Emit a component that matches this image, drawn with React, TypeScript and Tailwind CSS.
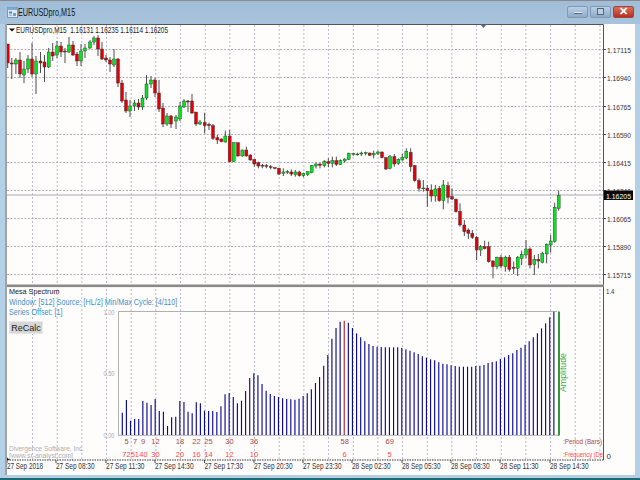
import React from "react";

type C = [number, number, number, number, number, "g" | "r"];

const seg1: C[] = [
  [7.7,44,63,44,68,"r"],[11.8,63,64,58,79,"r"],[15.9,60,64,58,74,"g"],[20,60,74,52,78,"r"],[24,69,75,61,83,"g"],[28,59,69,55,73,"g"],[32,59,74,43,77,"r"],[36,61,74,56,94,"g"],[40.5,61,63,52,73,"r"],[44.5,62,67,55,82,"r"],[48.7,52,67,48,68,"g"],[52.7,52,56,43,61,"r"],[57,46,55,41,58,"g"],[61,46,52,42,57,"r"],[65,51,52,48,63,"r"],[69,45,52,37,53,"g"],[73,45,55,41,56,"r"],[77,54,61,52,66,"r"],[81,51,61,44,66,"g"],[85,48,51,44,58,"g"],[90,42,48,40,49,"g"],[94,38,42,36,45,"g"],[98,38,49,35,56,"r"],[102,49,59,42,60,"r"],[106,58,60,55,62,"r"],[110,60,64,57,72,"r"],[114,59,65,49,67,"g"],[118,59,83,58,87,"r"],[122,83,101,80,103,"r"],[126,100,111,92,113,"r"],[130,106,111,100,117,"g"],[134.5,103,106,100,111,"g"],[138.5,103,107,99,110,"r"],[142.5,98,107,95,110,"g"],[146.5,84,98,75,100,"g"],[151,80,84,76,88,"g"],[155,80,93,78,97,"r"],[159,93,109,80,112,"r"],[163,108,124,103,127,"r"],[167,116,124,113,126,"g"],[171,116,124,115,128,"r"],[176,117,121,115,129,"g"],[180,106,119,102,121,"g"],[184,101,107,99,108,"g"],[188,101,102,100,112,"r"],[192,101,113,94,114,"r"],[196,112,124,112,126,"r"],
];

const seg2: C[] = ([
  [0,36,42,30,45,"g"],[14,38,47,8,70,"r"],[27,43,47,38,60,"r"],[39,47,85,42,90,"r"],[52,83,90,75,102,"r"],[64,87,95,85,97,"r"],[76,78,96,62,98,"g"],[89,78,155,60,157,"r"],[101,98,155,97,155,"g"],[114,98,138,98,140,"r"],[127,120,138,119,140,"g"],[139,120,138,110,140,"r"],[151,135,150,133,152,"r"],[163,148,162,148,170,"r"],[175,158,168,155,175,"r"],[187,166,168,162,175,"r"],[199,167,169,162,175,"r"],[212,170,172,165,178,"r"],[225,173,175,171,178,"r"],[237,175,192,173,195,"r"],[250,186,190,175,198,"g"],[262,185,187,180,192,"g"],[274,186,192,178,198,"r"],[286,186,194,180,200,"g"],[298,186,197,182,200,"r"],[310,190,197,188,202,"g"],[323,185,194,183,198,"g"],[335,166,188,165,190,"g"],[348,162,168,158,175,"g"],[360,162,166,158,175,"r"],[373,155,167,150,172,"g"],[385,155,160,145,172,"r"],[397,152,160,140,172,"g"],[409,152,163,140,168,"r"],[421,152,163,148,165,"g"],[434,147,153,145,158,"g"],[446,130,148,128,150,"g"],[460,131,133,128,137,"g"],[472,132,134,128,137,"g"],[484,129,132,125,138,"g"],[497,128,130,125,136,"g"],[509,129,136,128,138,"r"],[521,130,135,122,145,"g"],[534,126,131,122,135,"g"],[546,126,143,124,145,"r"],[558,143,177,142,180,"r"],[570,140,175,135,178,"g"],[583,140,162,132,170,"r"],[595,148,160,145,165,"g"],[607,142,150,132,152,"g"],[619,124,144,115,148,"g"],[632,127,170,115,185,"r"],[644,167,212,165,215,"r"],[657,212,235,205,245,"r"],
] as C[]).map(([x, t, b, h, l, c]) => [200 + x / 3, 110 + t / 3, 110 + b / 3, 110 + h / 3, 110 + l / 3, c] as C);

const seg3: C[] = ([
  [10,54,56,30,65,"g"],[22,55,62,45,110,"r"],[34,60,78,43,95,"r"],[46,57,78,45,95,"g"],[58,55,92,48,95,"r"],[70,45,92,30,118,"g"],[84,47,82,35,100,"r"],[96,80,87,55,90,"r"],[108,88,125,85,128,"r"],[120,124,165,100,170,"r"],[133,165,185,150,198,"r"],[145,180,190,175,207,"r"],[157,190,202,180,207,"r"],[170,202,240,198,270,"r"],[182,230,240,225,258,"g"],[194,230,236,212,238,"r"],[206,230,275,215,278,"r"],[219,273,290,270,325,"r"],[231,262,290,260,298,"g"],[243,262,288,255,295,"r"],[256,262,290,257,305,"g"],[268,262,298,255,305,"r"],[281,292,295,275,312,"r"],[293,262,295,258,318,"g"],[305,253,265,242,285,"g"],[318,237,255,210,265,"g"],[330,237,285,232,295,"r"],[343,268,283,255,315,"g"],[355,268,273,252,295,"r"],[367,250,277,245,280,"g"],[380,223,252,220,280,"g"],[392,213,225,195,248,"g"],[404,112,215,98,218,"g"],[416,77,115,62,122,"g"],
] as C[]).map(([x, t, b, h, l, c]) => [420 + x / 3, 170 + t / 3, 170 + b / 3, 170 + h / 3, 170 + l / 3, c] as C);

const candles = [...seg1, ...seg2, ...seg3];

const barTops = [
  338,300,362,357,357,303,308,315,297,333,335,378,352,350,303,306,335,340,307,310,332,333,333,336,319,283,279,291,310,302,273,234,220,226,252,272,282,288,291,295,297,298,299,296,288,280,268,249,231,197,165,116,84,65,62,68,
  84,100,112,124,132,138,140,141,142,142,142,142,144,148,152,157,162,169,173,178,181,187,191,193,196,198,200,200,200,200,198,197,195,189,186,184,177,172,165,160,150,143,134,124,112,100,85,70,52,35,
];

const vGrid = Array.from({ length: 24 }, (_, i) => 32.5 + i * 24.67);
const hGrid: [number, string][] = [
  [49.5, "1.17115"],[77.5, "1.16940"],[106.5, "1.16765"],[134.5, "1.16590"],[162.5, "1.16415"],[190.5, "1.16240"],[218.5, "1.16065"],[246.5, "1.15890"],[274.5, "1.15715"],
];
const times: [number, string][] = [
  [7, "27 Sep 2018"],[56, "27 Sep 08:30"],[106, "27 Sep 11:30"],[155, "27 Sep 14:30"],[204.5, "27 Sep 17:30"],[254, "27 Sep 20:30"],[303, "27 Sep 23:30"],[352, "28 Sep 02:30"],[402, "28 Sep 05:30"],[451, "28 Sep 08:30"],[500, "28 Sep 11:30"],[550, "28 Sep 14:30"],
];
const periods: [number, string][] = [[126.5,"5"],[135,"7"],[143,"9"],[155.5,"12"],[180,"18"],[196.5,"22"],[208.5,"25"],[229.5,"30"],[254,"36"],[344.7,"58"],[389.7,"69"]];
const freqs: [number, string][] = [[126.5,"72"],[134.8,"51"],[143.5,"40"],[155.5,"30"],[180,"20"],[196.5,"16"],[208.5,"14"],[229.5,"12"],[254,"10"],[344.7,"6"],[389.7,"5"]];

const Chart = () => (
  <svg viewBox="7 24 628 451" className="block w-[628px] h-[451px] font-['Liberation_Sans',sans-serif]">
    {vGrid.map((x) => (
      <line key={x} x1={x} x2={x} y1={25} y2={460} stroke="#aeb2c6" strokeWidth={0.9} strokeDasharray="2 2" />
    ))}
    {hGrid.map(([y]) => (
      <line key={y} x1={7} x2={603} y1={y} y2={y} stroke="#a8a8b4" strokeWidth={0.9} strokeDasharray="2 1.5" />
    ))}
    <line x1={7} x2={603} y1={195} y2={195} stroke="#a9a9b2" strokeWidth={1} />
    {candles.map(([x, t, b, h, l, c], i) => (
      <g key={i}>
        <line x1={x} x2={x} y1={h} y2={l} stroke="#3a3a3a" strokeWidth={0.9} />
        <rect x={x - 1.5} y={t} width={3} height={Math.max(b - t, 0.8)} fill={c === "g" ? "#00e81c" : "#e00008"} stroke="#2a2a2a" strokeWidth={0.4} />
      </g>
    ))}
    <path d="M7 24.5H603.5V460" fill="none" stroke="#555" strokeWidth={1} />
    <path d="M480.5 24.5h6l-3 3.5z" fill="#5c6478" />
    <path d="M9 28.5h6l-3 3z" fill="#111" />
    <text x={16} y={32.5} textLength={152} lengthAdjust="spacingAndGlyphs" className="text-[8.5px] fill-[#222]" xmlSpace="preserve">
      EURUSDpro,M15  1.16131 1.16235 1.16114 1.16205
    </text>
    {hGrid.map(([y, t]) => (
      <g key={t}>
        <line x1={603.5} x2={606} y1={y} y2={y} stroke="#444" />
        <text x={607} y={y + 3} textLength={24} lengthAdjust="spacingAndGlyphs" className="text-[7.8px] fill-[#333]">{t}</text>
      </g>
    ))}
    <rect x={604} y={190.5} width={29} height={9.5} fill="#0a0a0a" />
    <text x={606} y={198.5} textLength={25} lengthAdjust="spacingAndGlyphs" className="text-[7.8px] fill-[#fff]">1.16205</text>

    <rect x={7} y={284.5} width={597} height={2.6} fill="#8a8a8a" />
    <text x={606} y={293.5} textLength={8.5} lengthAdjust="spacingAndGlyphs" className="text-[8px] fill-[#333]">1.4</text>
    <text x={606.5} y={459} className="text-[8px] fill-[#333]">0</text>

    <path d="M118.5 435V311.5H557" fill="none" stroke="#b0b0b0" strokeWidth={1} />
    <line x1={118} x2={559} y1={435.3} y2={435.3} stroke="#b0b0b0" strokeWidth={1} />
    {barTops.map((t, i) => {
      const x = 122.3 + i * 4.11;
      return <line key={i} x1={x} x2={x} y1={300 + t / 3} y2={435} stroke={i === 54 ? "#b02428" : "#0a0a90"} strokeWidth={1.15} />;
    })}
    <rect x={558} y={311.5} width={2} height={124} fill="#2c9c34" />
    <text transform="translate(566 392) rotate(-90)" textLength={39} lengthAdjust="spacingAndGlyphs" className="text-[9.5px] fill-[#3aa844]">Amplitude</text>
    {([["1.00", 315],["0.50", 376],["0.00", 437.5]] as [string, number][]).map(([t, y]) => (
      <text key={t} x={103.5} y={y} textLength={11} lengthAdjust="spacingAndGlyphs" className="text-[7px] fill-[#aaa]">{t}</text>
    ))}
    {periods.map(([x, t]) => (
      <text key={x} x={x} y={444} textAnchor="middle" className="text-[7.5px] fill-[#a84a4a]">{t}</text>
    ))}
    {freqs.map(([x, t]) => (
      <text key={x} x={x} y={457} textAnchor="middle" className="text-[7.5px] fill-[#ff4848]">{t}</text>
    ))}
    <text x={563} y={444} textLength={39} lengthAdjust="spacingAndGlyphs" className="text-[7.5px] fill-[#a84a4a]">:Period (Bars)</text>
    <text x={563} y={457} textLength={40} lengthAdjust="spacingAndGlyphs" className="text-[7px] fill-[#ff4848]">:Frequency (De</text>
    <text x={9} y={450.5} textLength={75} lengthAdjust="spacingAndGlyphs" className="text-[7.5px] fill-[#aeaeae]">Divergence Software, Inc.</text>
    <text x={9} y={458} textLength={64} lengthAdjust="spacingAndGlyphs" className="text-[7.5px] fill-[#aeaeae]">[www.sr-analyst.com]</text>

    <line x1={7} x2={603.5} y1={460} y2={460} stroke="#333" strokeWidth={1} strokeDasharray="1.5 1" />
    <path d="M7 457.5l3 2.5h-3z" fill="#222" />
    {times.map(([x, t]) => (
      <g key={t}>
        <line x1={x} x2={x} y1={460} y2={463} stroke="#444" />
        <text x={x} y={469} textLength={t.length === 11 ? 36 : 38.5} lengthAdjust="spacingAndGlyphs" className="text-[8.5px] fill-[#333]">{t}</text>
      </g>
    ))}
  </svg>
);

export default function App() {
  return (
    <div className="w-[640px] h-[480px] overflow-hidden flex flex-col bg-[#b4d0e6] font-['Liberation_Sans',sans-serif]">
      <div className="h-[24px] shrink-0 flex items-center pl-[7px] pr-[6px] border-t border-[#8a8a8a] bg-gradient-to-b from-[#a0bcd8] to-[#a8c4dc]">
        <svg width="11" height="11" viewBox="0 0 11 11" className="shrink-0">
          <rect x="0.5" y="0.5" width="10" height="10" fill="#dfeaf6" stroke="#6f9bcb" />
          <rect x="0.5" y="0.5" width="10" height="2.5" fill="#7ea8d6" />
          <rect x="2" y="4.5" width="3" height="2" fill="#4f86c4" />
          <rect x="6" y="6" width="3" height="3" fill="#6e9ed2" />
          <rect x="2" y="7.5" width="3" height="1.5" fill="#9dbde0" />
        </svg>
        <span className="ml-[0px] text-[10.5px] text-[#161616] whitespace-nowrap origin-left scale-x-[0.69]">EURUSDpro,M15</span>
        <div className="ml-auto flex items-start gap-[2px] -mt-[2px]">
          <div className="w-[21px] h-[12px] flex items-center justify-center rounded-[2px] border border-[#7f99b5] bg-gradient-to-b from-[#bcd0e4] to-[#8eaac8]">
            <div className="w-[8px] h-[2px] bg-[#e8eef4] border-b border-[#55677c] mt-[2px]" />
          </div>
          <div className="w-[21px] h-[12px] flex items-center justify-center rounded-[2px] border border-[#7f99b5] bg-gradient-to-b from-[#bcd0e4] to-[#8eaac8]">
            <div className="w-[7px] h-[7px] border border-[#55677c] bg-[#bcd0e4]" />
          </div>
          <div className="w-[21px] h-[12px] flex items-center justify-center rounded-[2px] border border-[#9a4a3c] bg-gradient-to-b from-[#d9705c] to-[#b5301e]">
            <span className="text-[11px] leading-none font-bold text-white">✕</span>
          </div>
        </div>
      </div>
      <div className="relative ml-[5px] mr-[5px] h-[451px] shrink-0 bg-[#fffcfc] border-l-2 border-[#a2a2a2]">
        <Chart />
        <div className="absolute left-[2px] top-[263px] leading-[10px] whitespace-nowrap">
          <div className="text-[8px] text-[#222] origin-left scale-x-[0.9]">Mesa Spectrum</div>
          <div className="text-[9px] text-[#3b93c4] origin-left scale-x-[0.8]">Window: [512] Source: [HL/2] Min/Max Cycle: [4/110]</div>
          <div className="text-[9px] text-[#3b93c4] origin-left scale-x-[0.8]">Series Offset: [1]</div>
          <div className="mt-[4px] w-[34px] h-[13px] flex items-center justify-center bg-[#d6d6d6] border border-[#e8e8e8] text-[9px] text-[#222]">ReCalc</div>
        </div>
      </div>
      <div className="flex-1 min-h-0 flex flex-col justify-end">
        <div className="h-[2px] bg-[#1f6b74]" />
      </div>
    </div>
  );
}
